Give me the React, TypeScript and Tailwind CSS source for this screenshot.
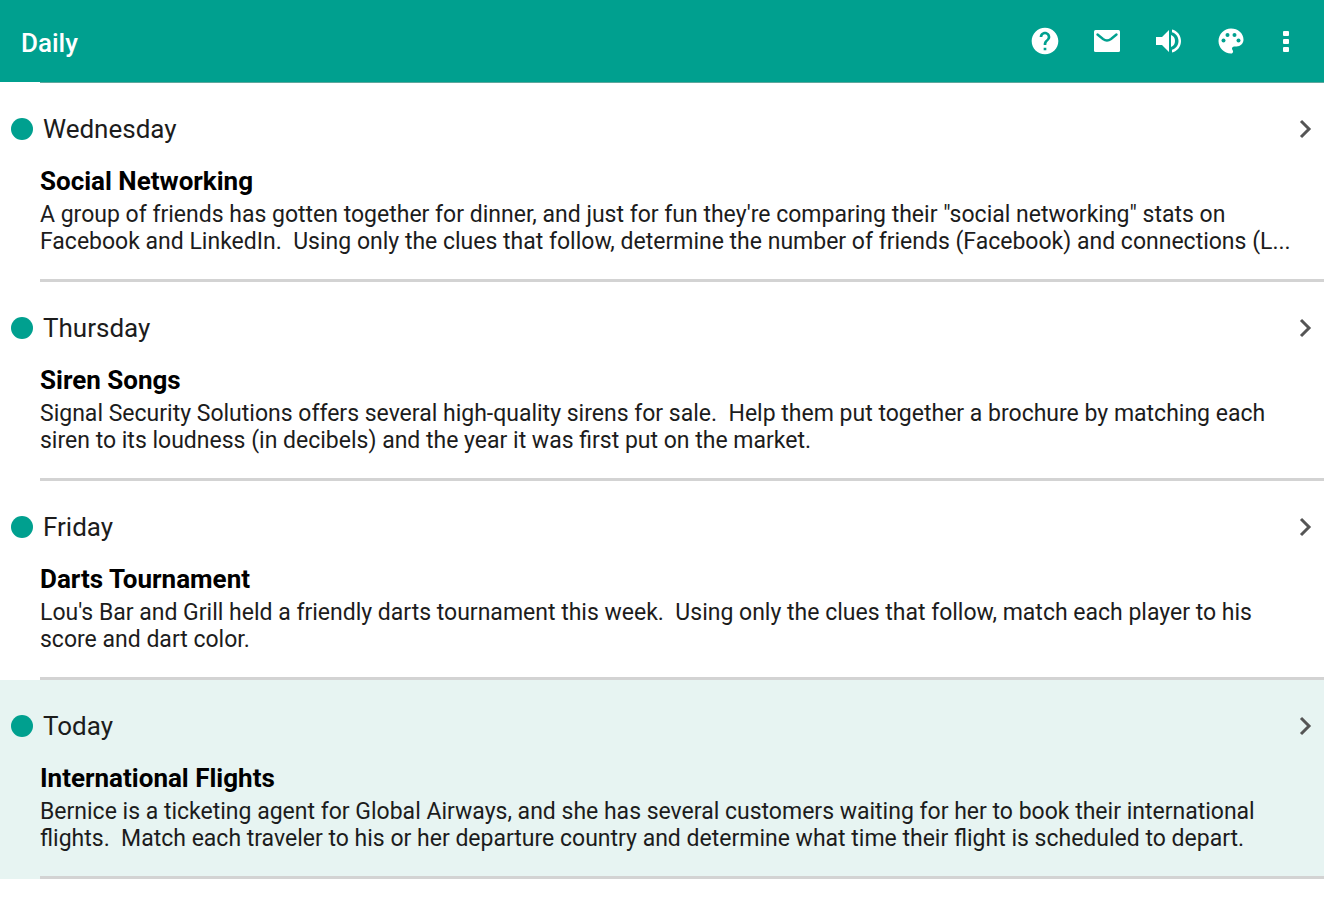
import type { ReactNode } from 'react'

interface Puzzle {
  day: string
  title: string
  summary: string
  today?: boolean
}

const PUZZLES: Puzzle[] = [
  {
    day: 'Wednesday',
    title: 'Social Networking',
    summary:
      'A group of friends has gotten together for dinner, and just for fun they\'re comparing their "social networking" stats on Facebook and LinkedIn.  Using only the clues that follow, determine the number of friends (Facebook) and connections (L...',
  },
  {
    day: 'Thursday',
    title: 'Siren Songs',
    summary:
      'Signal Security Solutions offers several high-quality sirens for sale.  Help them put together a brochure by matching each siren to its loudness (in decibels) and the year it was first put on the market.',
  },
  {
    day: 'Friday',
    title: 'Darts Tournament',
    summary:
      "Lou's Bar and Grill held a friendly darts tournament this week.  Using only the clues that follow, match each player to his score and dart color.",
  },
  {
    day: 'Today',
    title: 'International Flights',
    summary:
      'Bernice is a ticketing agent for Global Airways, and she has several customers waiting for her to book their international flights.  Match each traveler to his or her departure country and determine what time their flight is scheduled to depart.',
    today: true,
  },
]

const ACTIONS: { label: string; icon: ReactNode }[] = [
  { label: 'Help', icon: <HelpIcon /> },
  { label: 'Messages', icon: <MailIcon /> },
  { label: 'Sound', icon: <SoundIcon /> },
  { label: 'Theme', icon: <PaletteIcon /> },
]

export default function App() {
  return (
    <div className="min-h-screen bg-white font-['Roboto',sans-serif] text-[#1c1c1c]">
      <TopBar />
      <ul className="before:ml-10 before:block before:h-px before:bg-[#5fa79d]">
        {PUZZLES.map((p) => (
          <PuzzleRow key={p.day} puzzle={p} />
        ))}
      </ul>
    </div>
  )
}

function TopBar() {
  return (
    <header className="flex h-[82px] items-center bg-[#00a08f] pl-[21px] pr-[22px] text-white">
      <h1 className="flex-1 pt-1 text-[26px] font-medium leading-8">Daily</h1>
      <div className="flex items-center">
        <div className="flex items-center gap-[30px]">
          {ACTIONS.map(({ label, icon }) => (
            <button key={label} aria-label={label}>
              {icon}
            </button>
          ))}
        </div>
        <button aria-label="More options" className="ml-[23px]">
          <MoreIcon />
        </button>
      </div>
    </header>
  )
}

function PuzzleRow({ puzzle }: { puzzle: Puzzle }) {
  return (
    <li className={puzzle.today ? 'bg-[#e7f4f2]' : 'bg-white'}>
      <button className="block w-full text-left">
        <span className="flex items-center pl-[11px] pr-px pt-7">
          <span className="size-[22px] rounded-full bg-[#00a08f]" />
          <span className="ml-[10px] flex-1 text-[26px] leading-9">{puzzle.day}</span>
          <ChevronIcon />
        </span>
        <span className="ml-10 mt-4 block border-b-[3px] border-[#d3d3d3] pb-6 pr-3">
          <span className="block text-[26px] font-bold leading-9 text-black">{puzzle.title}</span>
          <span className="block whitespace-pre-wrap pt-[2px] text-[23px] leading-[27px]">{puzzle.summary}</span>
        </span>
      </button>
    </li>
  )
}

function HelpIcon() {
  return (
    <svg className="size-8" viewBox="0 0 24 24" fill="currentColor" aria-hidden>
      <path d="M12 2C6.48 2 2 6.48 2 12s4.48 10 10 10 10-4.48 10-10S17.52 2 12 2zm1 17h-2v-2h2v2zm2.07-7.75-.9.92C13.45 12.9 13 13.5 13 15h-2v-.5c0-1.1.45-2.1 1.17-2.83l1.24-1.26c.37-.36.59-.86.59-1.41 0-1.1-.9-2-2-2s-2 .9-2 2H8c0-2.21 1.79-4 4-4s4 1.79 4 4c0 .88-.36 1.68-.93 2.25z" />
    </svg>
  )
}

function MailIcon() {
  return (
    <svg className="size-8" viewBox="0 0 32 32" aria-hidden>
      <rect x="3" y="5" width="26" height="22" rx="1.5" fill="currentColor" />
      <path d="M6.5 9.5 12 14q4 3 8 0l5.500-4.500" fill="none" stroke="#00a08f" strokeWidth="2.400" strokeLinecap="round" />
    </svg>
  )
}

function SoundIcon() {
  return (
    <svg className="size-8" viewBox="0 0 32 32" fill="currentColor" aria-hidden>
      <path d="M3 12v8h6l7 7V5l-7 7z" />
      <path d="M18 10v12c2.600-1 4-3.300 4-6s-1.400-5-4-6z" />
      <path d="M19 4.500v2.800c4 1.200 6.500 4.600 6.500 8.700s-2.500 7.500-6.500 8.700v2.800c5.300-1.200 9-5.900 9-11.500S24.300 5.700 19 4.500z" />
    </svg>
  )
}

function PaletteIcon() {
  return (
    <svg className="size-8" viewBox="0 0 32 32" aria-hidden>
      <path
        d="M16 3.500C9 3.500 3.500 9.100 3.500 16S9 28.500 16 28.500c1.200 0 2.100-.9 2.100-2.100 0-.5-.2-1-.6-1.400-.3-.4-.5-.8-.5-1.400 0-1.100.9-2.100 2.100-2.100h2.400c3.900 0 7-3.100 7-7C28.500 8.400 22.900 3.500 16 3.500z"
        fill="currentColor"
      />
      <g fill="#00a08f">
        <circle cx="8.500" cy="15.500" r="2" />
        <circle cx="12.500" cy="10" r="2" />
        <circle cx="19.500" cy="10" r="2" />
        <circle cx="23.500" cy="15.500" r="2" />
      </g>
    </svg>
  )
}

function MoreIcon() {
  return (
    <svg className="size-8" viewBox="0 0 32 32" fill="currentColor" aria-hidden>
      <rect x="13" y="6" width="6" height="5" rx="1" />
      <rect x="13" y="14" width="6" height="5" rx="1" />
      <rect x="13" y="22" width="6" height="5" rx="1" />
    </svg>
  )
}

function ChevronIcon() {
  return (
    <svg className="size-9 text-[#555]" viewBox="0 0 36 36" fill="none" stroke="currentColor" strokeWidth="3" aria-hidden>
      <path d="m14 10 8 8-8 8" />
    </svg>
  )
}
